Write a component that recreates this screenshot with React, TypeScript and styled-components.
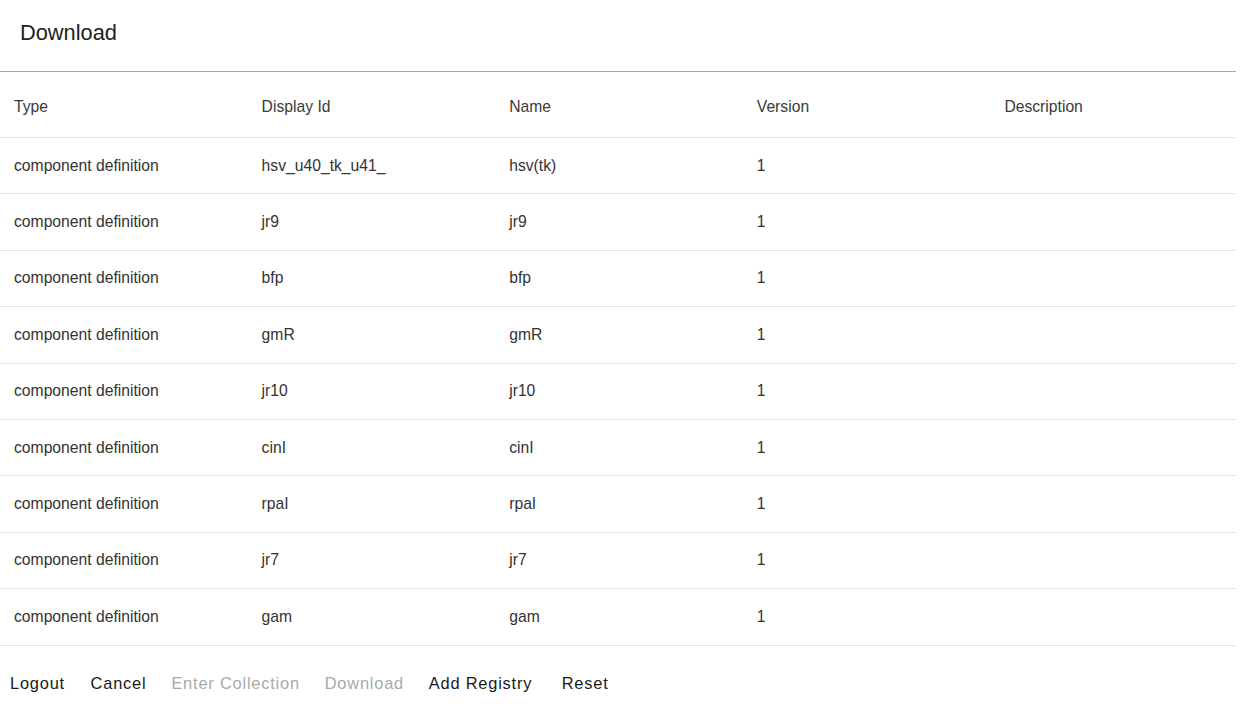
import React from 'react';
import styled, { createGlobalStyle } from 'styled-components';

const GlobalStyle = createGlobalStyle`
  body {
    margin: 0;
    background: #ffffff;
    font-family: "Liberation Sans", Arial, sans-serif;
    color: #333333;
  }
`;

interface Part {
  displayId: string;
  name: string;
  version: string;
  description: string;
}

const parts: Part[] = [
  { displayId: 'hsv_u40_tk_u41_', name: 'hsv(tk)', version: '1', description: '' },
  { displayId: 'jr9', name: 'jr9', version: '1', description: '' },
  { displayId: 'bfp', name: 'bfp', version: '1', description: '' },
  { displayId: 'gmR', name: 'gmR', version: '1', description: '' },
  { displayId: 'jr10', name: 'jr10', version: '1', description: '' },
  { displayId: 'cinI', name: 'cinI', version: '1', description: '' },
  { displayId: 'rpaI', name: 'rpaI', version: '1', description: '' },
  { displayId: 'jr7', name: 'jr7', version: '1', description: '' },
  { displayId: 'gam', name: 'gam', version: '1', description: '' },
];

const actions = [
  { label: 'Logout', disabled: false },
  { label: 'Cancel', disabled: false },
  { label: 'Enter Collection', disabled: true },
  { label: 'Download', disabled: true },
  { label: 'Add Registry', disabled: false },
  { label: 'Reset', disabled: false },
];

export default function App() {
  return (
    <>
      <GlobalStyle />
      <Dialog>
        <Title>Download</Title>
        <Table>
          <HeadRow>
            <Cell>Type</Cell>
            <Cell>Display Id</Cell>
            <Cell>Name</Cell>
            <Cell>Version</Cell>
            <Cell>Description</Cell>
          </HeadRow>
          {parts.map((p) => (
            <BodyRow key={p.displayId}>
              <Cell>component definition</Cell>
              <Cell>{p.displayId}</Cell>
              <Cell>{p.name}</Cell>
              <Cell>{p.version}</Cell>
              <Cell>{p.description}</Cell>
            </BodyRow>
          ))}
        </Table>
        <Actions>
          {actions.map((a) => (
            <ActionButton key={a.label} disabled={a.disabled} $disabled={a.disabled}>
              {a.label}
            </ActionButton>
          ))}
        </Actions>
      </Dialog>
    </>
  );
}

const Dialog = styled.div`
  width: 1236px;
  display: flex;
  flex-direction: column;
`;

const Title = styled.h2`
  margin: 0;
  height: 72px;
  box-sizing: border-box;
  padding: 20px 0 0 20px;
  font-size: 21.8px;
  line-height: 25px;
  font-weight: 400;
  color: #222222;
  border-bottom: 1px solid #a6a6a6;
`;

const Table = styled.div`
  display: flex;
  flex-direction: column;
`;

const Row = styled.div`
  display: grid;
  grid-template-columns: repeat(4, 247.6px) 1fr;
  align-items: center;
  box-sizing: border-box;
  border-bottom: 1px solid #e3e3e3;
`;

const HeadRow = styled(Row)`
  height: 66px;
  padding-top: 5px;
  color: #3a3a3a;
`;

const BodyRow = styled(Row)`
  height: 56.4px;
  color: #333333;
`;

const Cell = styled.div`
  padding-left: 14px;
  font-size: 15.7px;
  line-height: 20px;
  white-space: nowrap;
  overflow: hidden;
`;

const Actions = styled.div`
  display: flex;
  align-items: center;
  gap: 6px;
  padding: 17px 0 0 0;
`;

const ActionButton = styled.button<{ $disabled: boolean }>`
  min-width: 75px;
  height: 42px;
  padding: 0 9.4px;
  border: none;
  background: transparent;
  font-family: "Liberation Sans", Arial, sans-serif;
  font-size: 16.4px;
  font-weight: 500;
  letter-spacing: 0.8px;
  color: ${(p) => (p.$disabled ? '#a9a9a9' : '#1a1a1a')};
  cursor: ${(p) => (p.$disabled ? 'default' : 'pointer')};
`;
